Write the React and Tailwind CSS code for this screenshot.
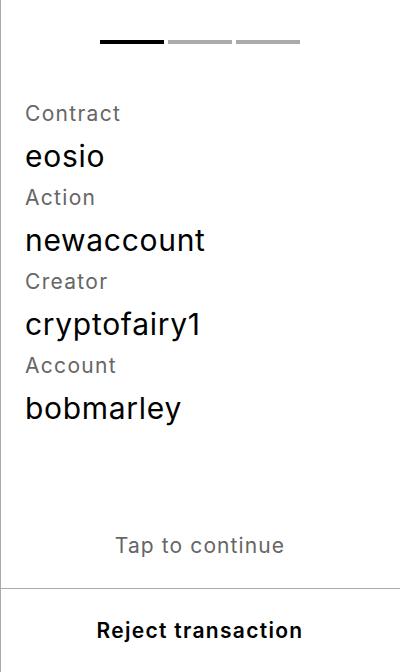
export default function App() {
  const rows = [
    ["Contract", "eosio"],
    ["Action", "newaccount"],
    ["Creator", "cryptofairy1"],
    ["Account", "bobmarley"],
  ];
  return (
    <div className="w-[400px] h-[672px] bg-white shadow-[inset_1px_0_0_#aaaaaa] flex flex-col" style={{ fontFamily: "Inter, 'Noto Sans', sans-serif" }}>
      <div className="flex justify-center gap-1 pt-10">
        <div className="w-16 h-1 bg-black" />
        <div className="w-16 h-1 bg-[#aaaaaa]" />
        <div className="w-16 h-1 bg-[#aaaaaa]" />
      </div>
      <div className="flex flex-col pl-[25px] pt-[49px]">
        {rows.map(([l, v]) => (
          <div key={l} className="flex flex-col">
            <div className="text-[21px] leading-[42px] tracking-[1.3px] text-[#666666]">{l}</div>
            <div className="text-[30px] leading-[42px] tracking-[0.7px] text-black">{v}</div>
          </div>
        ))}
      </div>
      <div className="flex-1" />
      <div className="h-[84px] flex items-center justify-center text-[21px] tracking-[1.1px] text-[#666666]">Tap to continue</div>
      <div className="h-[84px] border-t border-[#aaaaaa] flex items-center justify-center text-[21px] font-semibold tracking-[1.3px] text-black">Reject transaction</div>
    </div>
  );
}
